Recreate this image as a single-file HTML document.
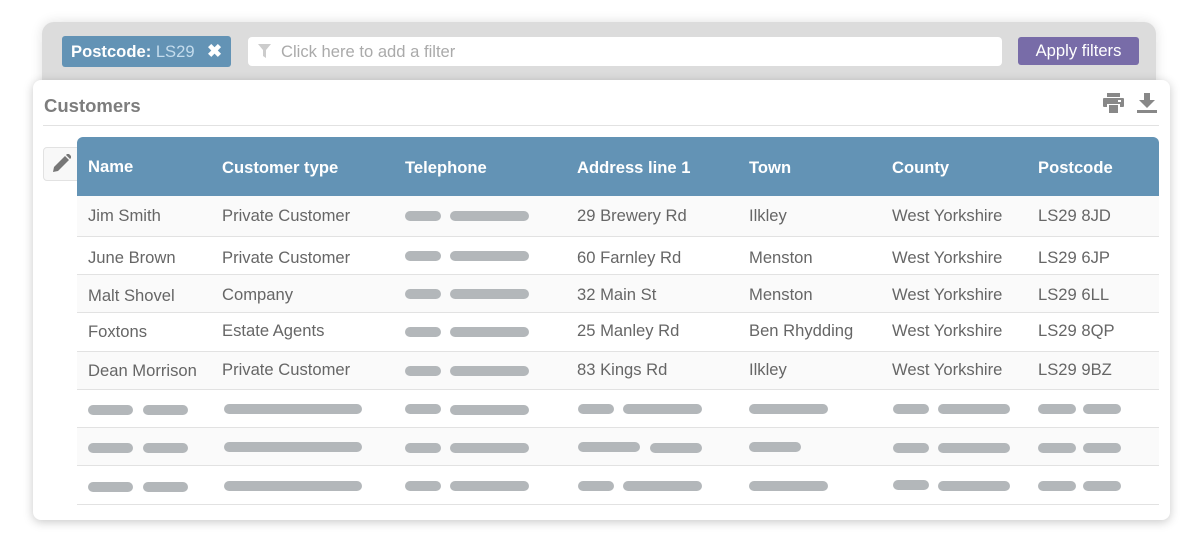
<!DOCTYPE html>
<html><head><meta charset="utf-8"><style>
*{margin:0;padding:0;box-sizing:border-box}
body{width:1200px;height:545px;background:#fff;position:relative;overflow:hidden;font-family:"Liberation Sans",sans-serif}
.a{position:absolute}
.bar{position:absolute;height:10px;border-radius:5px;background:#b3b7ba}
.t{position:absolute;font-size:16.6px;color:#666;white-space:nowrap;line-height:18px;margin-top:1px}
.h{position:absolute;font-size:16.6px;color:#fff;font-weight:bold;white-space:nowrap;line-height:18px;margin-top:1px}
.row{position:absolute;left:77px;width:1082px;border-bottom:1px solid #e2e2e2}
</style></head><body>
<div class="a" style="left:42px;top:22px;width:1114px;height:80px;background:#dcdcdc;border-radius:12px;box-shadow:0 0 12px rgba(0,0,0,.12)"></div>
<div class="a" style="left:62px;top:36px;width:169px;height:31px;background:#6393b5;border-radius:3px"></div>
<div class="a" style="left:71px;top:43px;font-size:16.6px;line-height:18px;color:#fff;font-weight:bold;white-space:nowrap">Postcode: <span style="font-weight:normal;color:#c4dced">LS29</span></div>
<div class="a" style="left:207px;top:41px;font-size:18px;line-height:20px;color:#fff;font-weight:bold">✖</div>
<div class="a" style="left:248px;top:37px;width:754px;height:29px;background:#fff;border-radius:4px"></div>
<svg class="a" style="left:258px;top:44px" width="13" height="14" viewBox="0 0 13 14"><path d="M0 0H13L8 6V14L5 12V6Z" fill="#ccc"/></svg>
<div class="a" style="left:281px;top:43px;font-size:16.6px;line-height:18px;color:#aaa;white-space:nowrap">Click here to add a filter</div>
<div class="a" style="left:1018px;top:37px;width:121px;height:28px;background:#786ca8;border-radius:3px;color:#fff;font-size:16.6px;line-height:28px;text-align:center">Apply filters</div>

<div class="a" style="left:33px;top:80px;width:1137px;height:440px;background:#fff;border-radius:8px;box-shadow:0 2px 10px rgba(0,0,0,.22)"></div>
<div class="a" style="left:44px;top:96px;font-size:18.5px;line-height:20px;font-weight:bold;color:#7d7d7d">Customers</div>
<div class="a" style="left:43px;top:125px;width:1116px;height:1px;background:#e2e2e2"></div>
<svg class="a" style="left:1103px;top:93px" width="21" height="20" viewBox="0 0 21 20"><rect x="4" y="0" width="13" height="4" fill="#888"/><rect x="0" y="5" width="21" height="9" rx="1" fill="#888"/><rect x="15" y="7" width="3" height="2" fill="#fff"/><rect x="4" y="11" width="13" height="9" fill="#fff"/><rect x="6" y="12" width="9" height="8" fill="#888"/></svg>
<svg class="a" style="left:1137px;top:93px" width="20" height="20" viewBox="0 0 20 20"><path d="M7 0H13V7H18L10 15L2 7H7Z" fill="#888"/><rect x="0" y="17" width="20" height="3" fill="#888"/></svg>
<div class="a" style="left:43px;top:147px;width:40px;height:34px;background:#f8f8f8;border:1px solid #e2e2e2;border-radius:4px"></div>
<svg class="a" style="left:53px;top:154px" width="18" height="18" viewBox="0 0 18 18"><path d="M0 18L1 13L12 2L16 6L5 17Z" fill="#777"/><path d="M13 1L15 -1L19 3L17 5Z" fill="#777"/></svg>

<div class="a" style="left:77px;top:137px;width:1082px;height:59px;background:#6393b5;border-radius:6px 6px 0 0"></div>
<div class="h" style="left:88px;top:157px">Name</div>
<div class="h" style="left:222px;top:158px">Customer type</div>
<div class="h" style="left:405px;top:158px">Telephone</div>
<div class="h" style="left:577px;top:158px">Address line 1</div>
<div class="h" style="left:749px;top:158px">Town</div>
<div class="h" style="left:892px;top:158px">County</div>
<div class="h" style="left:1038px;top:158px">Postcode</div>

<div class="row" style="top:196px;height:41px;background:#fafafa"></div>
<div class="row" style="top:237px;height:38px;background:#fff"></div>
<div class="row" style="top:275px;height:38px;background:#fafafa"></div>
<div class="row" style="top:313px;height:39px;background:#fff"></div>
<div class="row" style="top:352px;height:38px;background:#fafafa"></div>
<div class="row" style="top:390px;height:38px;background:#fff"></div>
<div class="row" style="top:428px;height:38px;background:#fafafa"></div>
<div class="row" style="top:466px;height:39px;background:#fff"></div>

<div class="t" style="left:88px;top:206px">Jim Smith</div><div class="t" style="left:222px;top:206px">Private Customer</div><div class="t" style="left:577px;top:206px">29 Brewery Rd</div><div class="t" style="left:749px;top:206px">Ilkley</div><div class="t" style="left:892px;top:206px">West Yorkshire</div><div class="t" style="left:1038px;top:206px">LS29 8JD</div>
<div class="t" style="left:88px;top:248px">June Brown</div><div class="t" style="left:222px;top:248px">Private Customer</div><div class="t" style="left:577px;top:248px">60 Farnley Rd</div><div class="t" style="left:749px;top:248px">Menston</div><div class="t" style="left:892px;top:248px">West Yorkshire</div><div class="t" style="left:1038px;top:248px">LS29 6JP</div>
<div class="t" style="left:88px;top:286px">Malt Shovel</div><div class="t" style="left:222px;top:285px">Company</div><div class="t" style="left:577px;top:285px">32 Main St</div><div class="t" style="left:749px;top:285px">Menston</div><div class="t" style="left:892px;top:285px">West Yorkshire</div><div class="t" style="left:1038px;top:285px">LS29 6LL</div>
<div class="t" style="left:88px;top:322px">Foxtons</div><div class="t" style="left:222px;top:321px">Estate Agents</div><div class="t" style="left:577px;top:321px">25 Manley Rd</div><div class="t" style="left:749px;top:321px">Ben Rhydding</div><div class="t" style="left:892px;top:321px">West Yorkshire</div><div class="t" style="left:1038px;top:321px">LS29 8QP</div>
<div class="t" style="left:88px;top:361px">Dean Morrison</div><div class="t" style="left:222px;top:360px">Private Customer</div><div class="t" style="left:577px;top:360px">83 Kings Rd</div><div class="t" style="left:749px;top:360px">Ilkley</div><div class="t" style="left:892px;top:360px">West Yorkshire</div><div class="t" style="left:1038px;top:360px">LS29 9BZ</div>

<div class="bar" style="left:405px;top:211px;width:36px"></div><div class="bar" style="left:450px;top:211px;width:79px"></div>
<div class="bar" style="left:405px;top:251px;width:36px"></div><div class="bar" style="left:450px;top:251px;width:79px"></div>
<div class="bar" style="left:405px;top:289px;width:36px"></div><div class="bar" style="left:450px;top:289px;width:79px"></div>
<div class="bar" style="left:405px;top:327px;width:36px"></div><div class="bar" style="left:450px;top:327px;width:79px"></div>
<div class="bar" style="left:405px;top:366px;width:36px"></div><div class="bar" style="left:450px;top:366px;width:79px"></div>

<div class="bar" style="left:88px;top:405px;width:45px"></div><div class="bar" style="left:143px;top:405px;width:45px"></div><div class="bar" style="left:224px;top:404px;width:138px"></div><div class="bar" style="left:405px;top:404px;width:36px"></div><div class="bar" style="left:450px;top:405px;width:79px"></div><div class="bar" style="left:578px;top:404px;width:36px"></div><div class="bar" style="left:623px;top:404px;width:79px"></div><div class="bar" style="left:749px;top:404px;width:79px"></div><div class="bar" style="left:893px;top:404px;width:36px"></div><div class="bar" style="left:938px;top:404px;width:72px"></div><div class="bar" style="left:1038px;top:404px;width:38px"></div><div class="bar" style="left:1083px;top:404px;width:38px"></div>

<div class="bar" style="left:88px;top:443px;width:45px"></div><div class="bar" style="left:143px;top:443px;width:45px"></div><div class="bar" style="left:224px;top:442px;width:138px"></div><div class="bar" style="left:405px;top:443px;width:36px"></div><div class="bar" style="left:450px;top:443px;width:79px"></div><div class="bar" style="left:578px;top:442px;width:62px"></div><div class="bar" style="left:650px;top:443px;width:52px"></div><div class="bar" style="left:749px;top:442px;width:52px"></div><div class="bar" style="left:893px;top:443px;width:36px"></div><div class="bar" style="left:938px;top:443px;width:72px"></div><div class="bar" style="left:1038px;top:443px;width:38px"></div><div class="bar" style="left:1083px;top:443px;width:38px"></div>

<div class="bar" style="left:88px;top:482px;width:45px"></div><div class="bar" style="left:143px;top:482px;width:45px"></div><div class="bar" style="left:224px;top:481px;width:138px"></div><div class="bar" style="left:405px;top:481px;width:36px"></div><div class="bar" style="left:450px;top:481px;width:79px"></div><div class="bar" style="left:578px;top:481px;width:36px"></div><div class="bar" style="left:623px;top:481px;width:79px"></div><div class="bar" style="left:749px;top:481px;width:79px"></div><div class="bar" style="left:893px;top:480px;width:36px"></div><div class="bar" style="left:938px;top:481px;width:72px"></div><div class="bar" style="left:1038px;top:481px;width:38px"></div><div class="bar" style="left:1083px;top:481px;width:38px"></div>
</body></html>
